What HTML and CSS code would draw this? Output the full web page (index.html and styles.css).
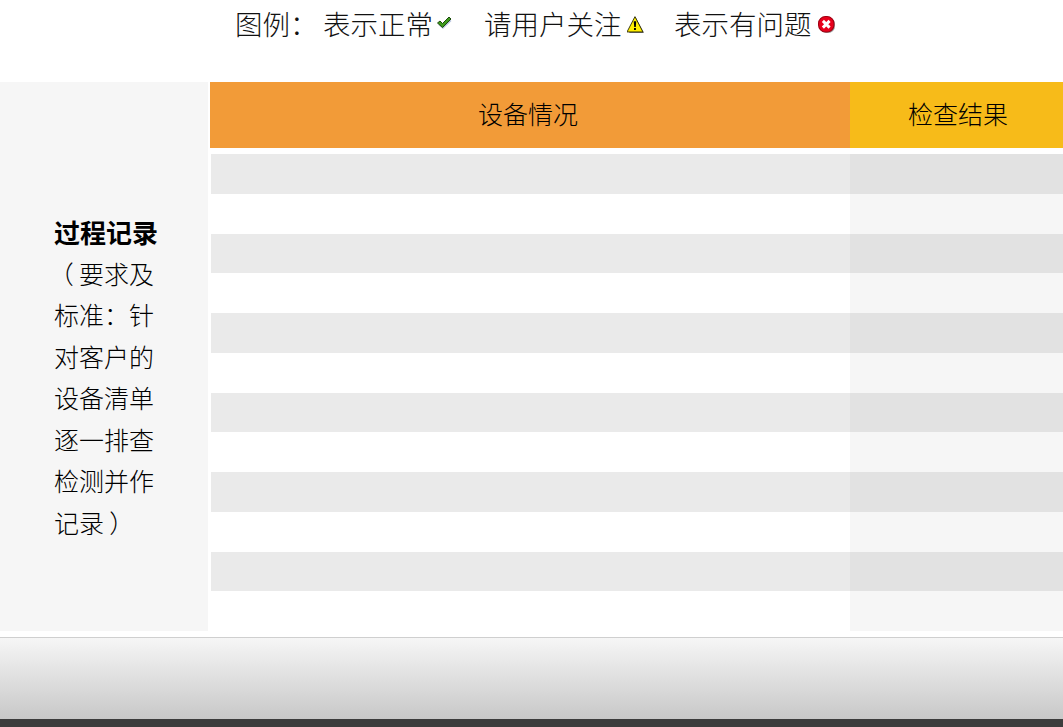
FILE: index.html
```html
<!DOCTYPE html>
<html lang="zh-CN">
<head>
<meta charset="utf-8">
<title>过程记录</title>
<link rel="stylesheet" href="styles.css">
</head>
<body>
<div class="page">
  <div class="legend">
    <span class="legend-title">图例：</span>
    <span class="legend-item item-ok">表示正常
      <svg class="icon" viewBox="0 0 16 16"><path d="M2.5 10 L4.5 8.5 L7 11 L14 4.5 L15.5 6 L7 14 Z" fill="#b8c4dc"/><path d="M1.5 8 L4 6 L6.5 8.5 L13 2 L15 4 L6.5 12.5 Z" fill="#3f9a1c" stroke="#1a4a0c" stroke-width="1"/></svg>
    </span>
    <span class="legend-item item-warn">请用户关注
      <svg class="icon icon-low" viewBox="0 0 16 16"><path d="M8 1 L16 16 L2 16 Z" fill="#777"/><path d="M7.5 .6 L15 15 L0 15 Z" fill="#ffee00" stroke="#1c1c00" stroke-width=".8"/><path d="M6.3 5 H8.7 L8.3 10.4 H6.8 Z M6.6 11.3 H8.4 V13.2 H6.6 Z" fill="#000"/></svg>
    </span>
    <span class="legend-item item-err">表示有问题
      <svg class="icon icon-low" viewBox="0 0 16 16"><rect x="1.5" y="1.5" width="14.5" height="14.5" rx="6.5" fill="#999"/><rect x=".5" y=".5" width="14.5" height="14.5" rx="6.5" fill="#e8001c" stroke="#a00012" stroke-width="1"/><path d="M4.6 4.6 L10.9 10.9 M10.9 4.6 L4.6 10.9" stroke="#fff" stroke-width="2.8"/></svg>
    </span>
  </div>
  <div class="board">
    <div class="side">
      <div class="side-text">
        <strong>过程记录</strong>
        <span class="line"><span class="paren">（</span><span>要求及</span></span>
        <span class="line">标准：针</span>
        <span class="line">对客户的</span>
        <span class="line">设备清单</span>
        <span class="line">逐一排查</span>
        <span class="line">检测并作</span>
        <span class="line"><span>记录</span><span class="paren">）</span></span>
      </div>
    </div>
    <div class="main">
      <div class="head">
        <div class="head-a">设备情况</div>
        <div class="head-b">检查结果</div>
      </div>
      <div class="rows">
        <div class="row"><div class="cell-a"></div><div class="cell-b"></div></div>
        <div class="row"><div class="cell-a"></div><div class="cell-b"></div></div>
        <div class="row"><div class="cell-a"></div><div class="cell-b"></div></div>
        <div class="row"><div class="cell-a"></div><div class="cell-b"></div></div>
        <div class="row"><div class="cell-a"></div><div class="cell-b"></div></div>
        <div class="row"><div class="cell-a"></div><div class="cell-b"></div></div>
        <div class="row"><div class="cell-a"></div><div class="cell-b"></div></div>
        <div class="row"><div class="cell-a"></div><div class="cell-b"></div></div>
        <div class="row"><div class="cell-a"></div><div class="cell-b"></div></div>
        <div class="row"><div class="cell-a"></div><div class="cell-b"></div></div>
        <div class="row"><div class="cell-a"></div><div class="cell-b"></div></div>
        <div class="row"><div class="cell-a"></div><div class="cell-b"></div></div>
      </div>
    </div>
  </div>
  <div class="footer"></div>
  <div class="bottom-bar"></div>
</div>
</body>
</html>
```
FILE: styles.css
```css
html, body {
  margin: 0;
  padding: 0;
  background: #fff;
}
body {
  font-family: "Noto Sans CJK SC", "Liberation Sans", sans-serif;
  font-weight: 300;
  color: #000;
}
.page {
  display: flex;
  flex-direction: column;
  height: 727px;
  overflow: hidden;
}
.legend {
  display: flex;
  align-items: flex-start;
  height: 82px;
  box-sizing: border-box;
  padding: 3px 0 0 235px;
  font-size: 27.5px;
  line-height: 40px;
  color: #111;
}
.legend-title {
  width: 88px;
}
.legend-item {
  display: flex;
  align-items: center;
}
.item-ok {
  gap: 3px;
  margin-right: 32px;
}
.item-warn {
  gap: 5.5px;
  margin-right: 30px;
}
.item-err {
  gap: 6.5px;
}
.icon {
  width: 16px;
  height: 16px;
  flex: none;
}
.icon-low {
  width: 17px;
  height: 17px;
  margin-top: 3px;
}
.board {
  display: flex;
  height: 549px;
}
.side {
  width: 208px;
  margin-right: 2px;
  flex: none;
  background: #f6f6f6;
  display: flex;
  align-items: center;
  box-sizing: border-box;
  padding: 41px 0 0 54px;
}
.side-text {
  width: 130px;
  font-size: 25px;
  line-height: 41.5px;
}
.side-text strong {
  display: block;
  font-size: 26px;
  font-weight: 700;
}
.line {
  display: block;
}
.paren {
  display: inline-block;
  width: 25px;
  text-align: center;
  font-feature-settings: "palt";
}
.main {
  flex: 1;
  display: flex;
  flex-direction: column;
}
.head {
  display: flex;
  height: 66px;
  margin-bottom: 6px;
  font-size: 25px;
  line-height: 63px;
  text-align: center;
}
.head-a {
  width: 640px;
  box-sizing: border-box;
  padding-right: 4px;
  background: #f29b38;
}
.head-b {
  flex: 1;
  box-sizing: border-box;
  padding-left: 3px;
  background: #f7bb19;
}
.rows {
  flex: 1;
  display: flex;
  flex-direction: column;
  margin-left: 1px;
}
.row {
  flex: 1;
  display: flex;
}
.cell-a {
  width: 639px;
  background: #fff;
}
.cell-b {
  flex: 1;
  background: #f6f6f6;
}
.row:nth-child(odd) .cell-a {
  background: #eaeaea;
}
.row:nth-child(odd) .cell-b {
  background: #e2e2e2;
}
.footer {
  margin-top: 6px;
  flex: 1;
  border-top: 1px solid #cfcfcf;
  background: linear-gradient(#f6f6f6, #c8c8c8);
}
.bottom-bar {
  height: 8px;
  background: #3c3c3c;
}
```
